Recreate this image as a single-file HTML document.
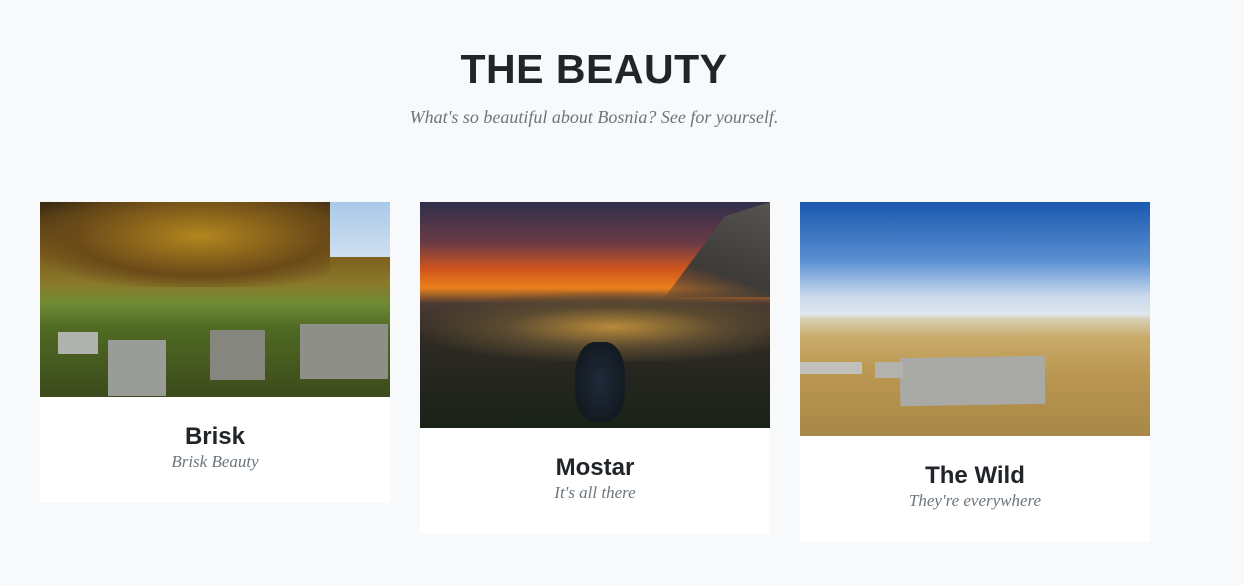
<!DOCTYPE html>
<html><head><meta charset="utf-8"><style>
body{margin:0;background:#f8f9fa;width:1244px;height:585px;overflow:hidden;position:relative;font-family:"Liberation Sans",sans-serif}
h1{position:absolute;top:46px;left:0;width:1188px;text-align:center;margin:0;font-size:41px;font-weight:700;color:#212529;letter-spacing:0.5px}
.sub{position:absolute;top:107px;left:0;width:1188px;text-align:center;font-family:"Liberation Serif",serif;font-style:italic;font-size:18px;color:#6c757d}
.card{position:absolute;top:202px;width:350px;background:#fff}
.img{width:350px;position:relative;overflow:hidden}
.t{text-align:center;font-weight:700;font-size:24px;color:#212529;margin-top:26px;line-height:28px}
.s{text-align:center;font-family:"Liberation Serif",serif;font-style:italic;font-size:17px;color:#6c757d;line-height:22px}
</style></head><body>
<h1>THE BEAUTY</h1>
<div class="sub">What's so beautiful about Bosnia? See for yourself.</div>

<div class="card" style="left:40px;height:301px">
 <div class="img" style="height:195px;background:linear-gradient(180deg,#3a2a12 0%,#7a5a1c 25%,#8a7a2a 42%,#6f8a34 52%,#4f6a22 65%,#3c4a1c 100%)">
  <div style="position:absolute;right:0;top:0;width:60px;height:55px;background:linear-gradient(180deg,#a9c9e8,#cfdff0)"></div>
  <div style="position:absolute;left:0;top:0;width:290px;height:85px;background:radial-gradient(ellipse at 55% 40%,#b3861f 0%,#6b4a18 55%,rgba(40,30,10,0) 80%)"></div>
  <div style="position:absolute;left:68px;top:138px;width:58px;height:56px;background:#9a9c98"></div>
  <div style="position:absolute;left:170px;top:128px;width:55px;height:50px;background:#85877f"></div>
  <div style="position:absolute;left:260px;top:122px;width:88px;height:55px;background:#8e8f88"></div>
  <div style="position:absolute;left:18px;top:130px;width:40px;height:22px;background:#b0b2ad"></div>
 </div>
 <div class="t">Brisk</div><div class="s">Brisk Beauty</div>
</div>

<div class="card" style="left:420px;height:332px">
 <div class="img" style="height:226px;background:linear-gradient(180deg,#2f2f4a 0%,#6a3a46 18%,#d2561c 30%,#e9801c 38%,#4a3a34 45%,#2e2a24 60%,#1a2218 100%)">
  <div style="position:absolute;right:0;top:0;width:150px;height:95px;background:linear-gradient(200deg,#565450 0%,#3d3b38 60%,rgba(40,40,40,0) 100%);clip-path:polygon(30% 100%,70% 15%,100% 0,100% 100%)"></div>
  <div style="position:absolute;left:0;top:90px;width:350px;height:70px;background:radial-gradient(ellipse at 55% 50%,#b88a3a 0%,#5a4a30 40%,rgba(30,30,20,0) 75%)"></div>
  <div style="position:absolute;left:155px;top:140px;width:50px;height:80px;background:radial-gradient(ellipse,#1e2a3a,#0f1418);border-radius:40%"></div>
 </div>
 <div class="t">Mostar</div><div class="s">It's all there</div>
</div>

<div class="card" style="left:800px;height:340px">
 <div class="img" style="height:234px;background:linear-gradient(180deg,#1a58b0 0%,#5a8fd0 25%,#c8d8ec 40%,#dfe6ee 48%,#d8cfb4 50%,#c8aa68 58%,#b99650 75%,#a88848 100%)">
  <div style="position:absolute;left:100px;top:155px;width:145px;height:48px;background:#a9aaa6;transform:rotate(-1deg)"></div>
  <div style="position:absolute;left:0;top:160px;width:62px;height:12px;background:#c0c0bc"></div>
  <div style="position:absolute;left:75px;top:160px;width:28px;height:16px;background:#b3b3ae"></div>
 </div>
 <div class="t">The Wild</div><div class="s">They're everywhere</div>
</div>
</body></html>
